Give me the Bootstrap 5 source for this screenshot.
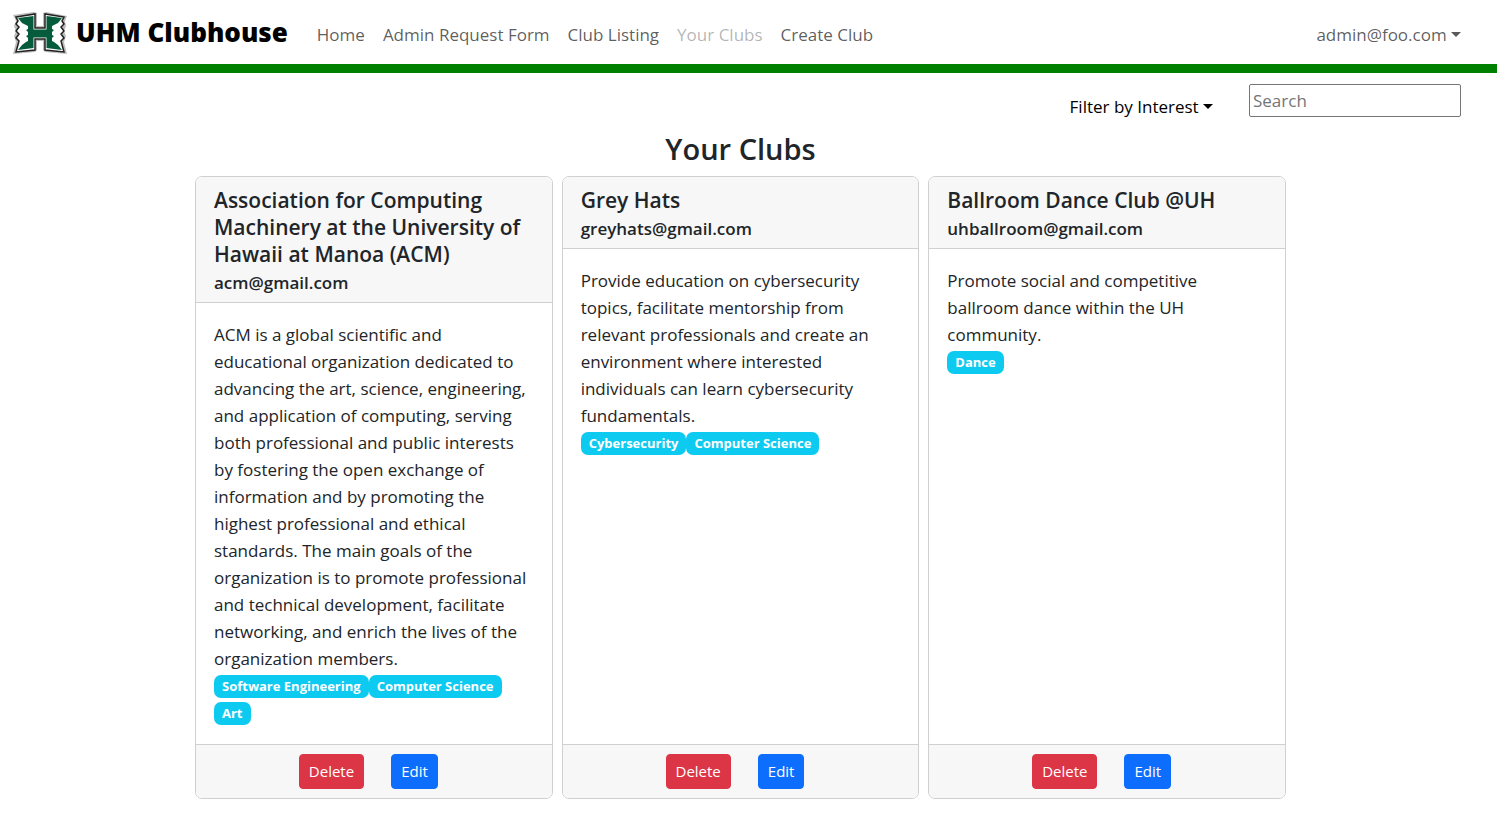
<!DOCTYPE html>
<html lang="en">
<head>
<meta charset="utf-8">
<meta name="viewport" content="width=device-width, initial-scale=1">
<title>UHM Clubhouse</title>
<link href="https://cdn.jsdelivr.net/npm/bootstrap@5.3.0/dist/css/bootstrap.min.css" rel="stylesheet">
<style>
  html { font-size: 18px; }
  body { font-family: "Open Sans", "Noto Sans", sans-serif; font-size: 17px; font-weight: 400; line-height: 27px; }
  .site-nav { border-bottom: 9px solid green; padding: 7px 36px 3px 12px; }
  .navbar-brand { font-size: 26px; font-weight: 800; line-height: 36px; padding: 5px 0; margin-right: 20px; color: #000; }
  .brand-text { margin: -4px 0 0 8px; }
  .site-nav .nav-link { padding: 14px 9px 13px; }
  .site-nav .nav-link.current { color: rgba(33, 37, 41, .35); }
  .toolbar { padding: 11px 36px 0 12px; gap: 36px; }
  .filter-toggle { color: #000; font: inherit; padding: 9px 0 0; border: 0; }
  .search-box { width: 212px; height: 33px; padding: 1px 3px; border: 1px solid #767676; border-radius: 2px; }
  .search-box::placeholder { color: #757575; }
  .page-main { padding-right: 16px; }
  .club-list { max-width: 1115px; padding: 0 12px; }
  .page-title { font-size: 29px; font-weight: 600; line-height: 38px; margin: 10px 0 8px; }
  .club-list .card { border-color: #d0d0d0; border-radius: 7px; }
  .club-list .card-header { background: #f7f7f7; border-color: #d0d0d0; padding: 10px 18px 8px; }
  .club-list .card-footer { background: #f7f7f7; border-color: #d0d0d0; padding: 9px 29px 9px 18px; gap: 27px; }
  .card-title { font-size: 21px; font-weight: 600; line-height: 27px; margin-bottom: 4px; }
  .club-mail { font-size: 17px; font-weight: 600; line-height: 22px; margin: 0; }
  .card-body { padding: 18px; }
  .tags { gap: 4px 0; padding: 3px 0 1px; }
  .club-list .badge { font-size: 13px; font-weight: 700; line-height: 13px; padding: 5px 8px; border-radius: 7px; }
  .club-list .btn { font-size: 15px; line-height: 23px; padding: 5px 9px; border-radius: 4px; }
</style>
</head>
<body>
<nav class="navbar navbar-expand-lg site-nav">
  <a class="navbar-brand d-flex align-items-center" href="#">
    <svg width="56" height="44" viewBox="0 0 56 44" aria-hidden="true">
      <path d="M1 3 L22 0 L25 1 L25 14 L31 14 L31 1 L34 0 L55 4 L53 9 L54 14 L52 19 L54 24 L52 30 L55 42 L33 40 L31 38 L31 29 L25 29 L25 38 L23 40 L1 42 L4 30 L2 24 L4 19 L2 14 L4 9 Z" fill="#bcbcbc"/>
      <path d="M4 5 L23 2 L23 16 L33 16 L33 2 L52 5 L50 9 L52 12 L49 15 L52 19 L49 22 L52 26 L49 29 L52 40 L33 38 L33 27 L23 27 L23 38 L4 40 L7 29 L4 26 L7 22 L4 19 L7 15 L4 12 L6 9 Z" fill="#fff" stroke="#222" stroke-width="1.5"/>
      <path d="M6 6 L21.500 4 L21.500 17.500 L34.500 17.500 L34.500 4 L50 6 L46 11 L42 13 L40 14 L40 17 L42 18 L40 20 L40 23 L42 24 L40 26 L40 29 L42 30 L46 33 L50 38 L34.500 36 L34.500 25.500 L21.500 25.500 L21.500 36 L6 38 L10 33 L14 30 L16 29 L16 26 L14 24 L16 23 L16 20 L14 18 L16 17 L16 14 L14 13 L10 11 Z" fill="#045c3c"/>
    </svg>
    <span class="brand-text">UHM Clubhouse</span>
  </a>
  <button class="navbar-toggler" type="button" data-bs-toggle="collapse" data-bs-target="#siteMenu" aria-controls="siteMenu" aria-label="Toggle navigation"><span class="navbar-toggler-icon"></span></button>
  <div class="collapse navbar-collapse" id="siteMenu">
    <ul class="navbar-nav me-auto">
      <li class="nav-item"><a class="nav-link" href="#">Home</a></li>
      <li class="nav-item"><a class="nav-link" href="#">Admin Request Form</a></li>
      <li class="nav-item"><a class="nav-link" href="#">Club Listing</a></li>
      <li class="nav-item"><a class="nav-link current" href="#" aria-current="page">Your Clubs</a></li>
      <li class="nav-item"><a class="nav-link" href="#">Create Club</a></li>
    </ul>
    <ul class="navbar-nav">
      <li class="nav-item dropdown"><a class="nav-link dropdown-toggle pe-0" href="#" role="button" data-bs-toggle="dropdown" aria-expanded="false">admin@foo.com</a>
        <ul class="dropdown-menu dropdown-menu-end"><li><a class="dropdown-item" href="#">Sign out</a></li></ul></li>
    </ul>
  </div>
</nav>

<div class="toolbar d-flex justify-content-end align-items-start">
  <button class="btn filter-toggle dropdown-toggle" type="button">Filter by Interest</button>
  <input class="search-box" type="search" placeholder="Search" aria-label="Search">
</div>

<main class="page-main">
  <div class="club-list mx-auto">
    <h1 class="page-title text-center">Your Clubs</h1>
    <div class="row row-cols-1 row-cols-md-3 g-2">
      <div class="col">
        <article class="card h-100">
          <div class="card-header">
            <h2 class="card-title">Association for Computing Machinery at the University of Hawaii at Manoa (ACM)</h2>
            <h3 class="club-mail">acm@gmail.com</h3>
          </div>
          <div class="card-body">
            <p class="mb-0">ACM is a global scientific and educational organization dedicated to advancing the art, science, engineering, and application of computing, serving both professional and public interests by fostering the open exchange of information and by promoting the highest professional and ethical standards. The main goals of the organization is to promote professional and technical development, facilitate networking, and enrich the lives of the organization members.</p>
            <div class="d-flex flex-wrap tags"><span class="badge bg-info">Software Engineering</span><span class="badge bg-info">Computer Science</span><span class="badge bg-info">Art</span></div>
          </div>
          <div class="card-footer d-flex justify-content-center">
            <button class="btn btn-danger" type="button">Delete</button>
            <button class="btn btn-primary" type="button">Edit</button>
          </div>
        </article>
      </div>
      <div class="col">
        <article class="card h-100">
          <div class="card-header">
            <h2 class="card-title">Grey Hats</h2>
            <h3 class="club-mail">greyhats@gmail.com</h3>
          </div>
          <div class="card-body">
            <p class="mb-0">Provide education on cybersecurity topics, facilitate mentorship from relevant professionals and create an environment where interested individuals can learn cybersecurity fundamentals.</p>
            <div class="d-flex flex-wrap tags"><span class="badge bg-info">Cybersecurity</span><span class="badge bg-info">Computer Science</span></div>
          </div>
          <div class="card-footer d-flex justify-content-center">
            <button class="btn btn-danger" type="button">Delete</button>
            <button class="btn btn-primary" type="button">Edit</button>
          </div>
        </article>
      </div>
      <div class="col">
        <article class="card h-100">
          <div class="card-header">
            <h2 class="card-title">Ballroom Dance Club @UH</h2>
            <h3 class="club-mail">uhballroom@gmail.com</h3>
          </div>
          <div class="card-body">
            <p class="mb-0">Promote social and competitive ballroom dance within the UH community.</p>
            <div class="d-flex flex-wrap tags"><span class="badge bg-info">Dance</span></div>
          </div>
          <div class="card-footer d-flex justify-content-center">
            <button class="btn btn-danger" type="button">Delete</button>
            <button class="btn btn-primary" type="button">Edit</button>
          </div>
        </article>
      </div>
    </div>
  </div>
</main>
<script src="https://cdn.jsdelivr.net/npm/bootstrap@5.3.0/dist/js/bootstrap.bundle.min.js"></script>
</body>
</html>
